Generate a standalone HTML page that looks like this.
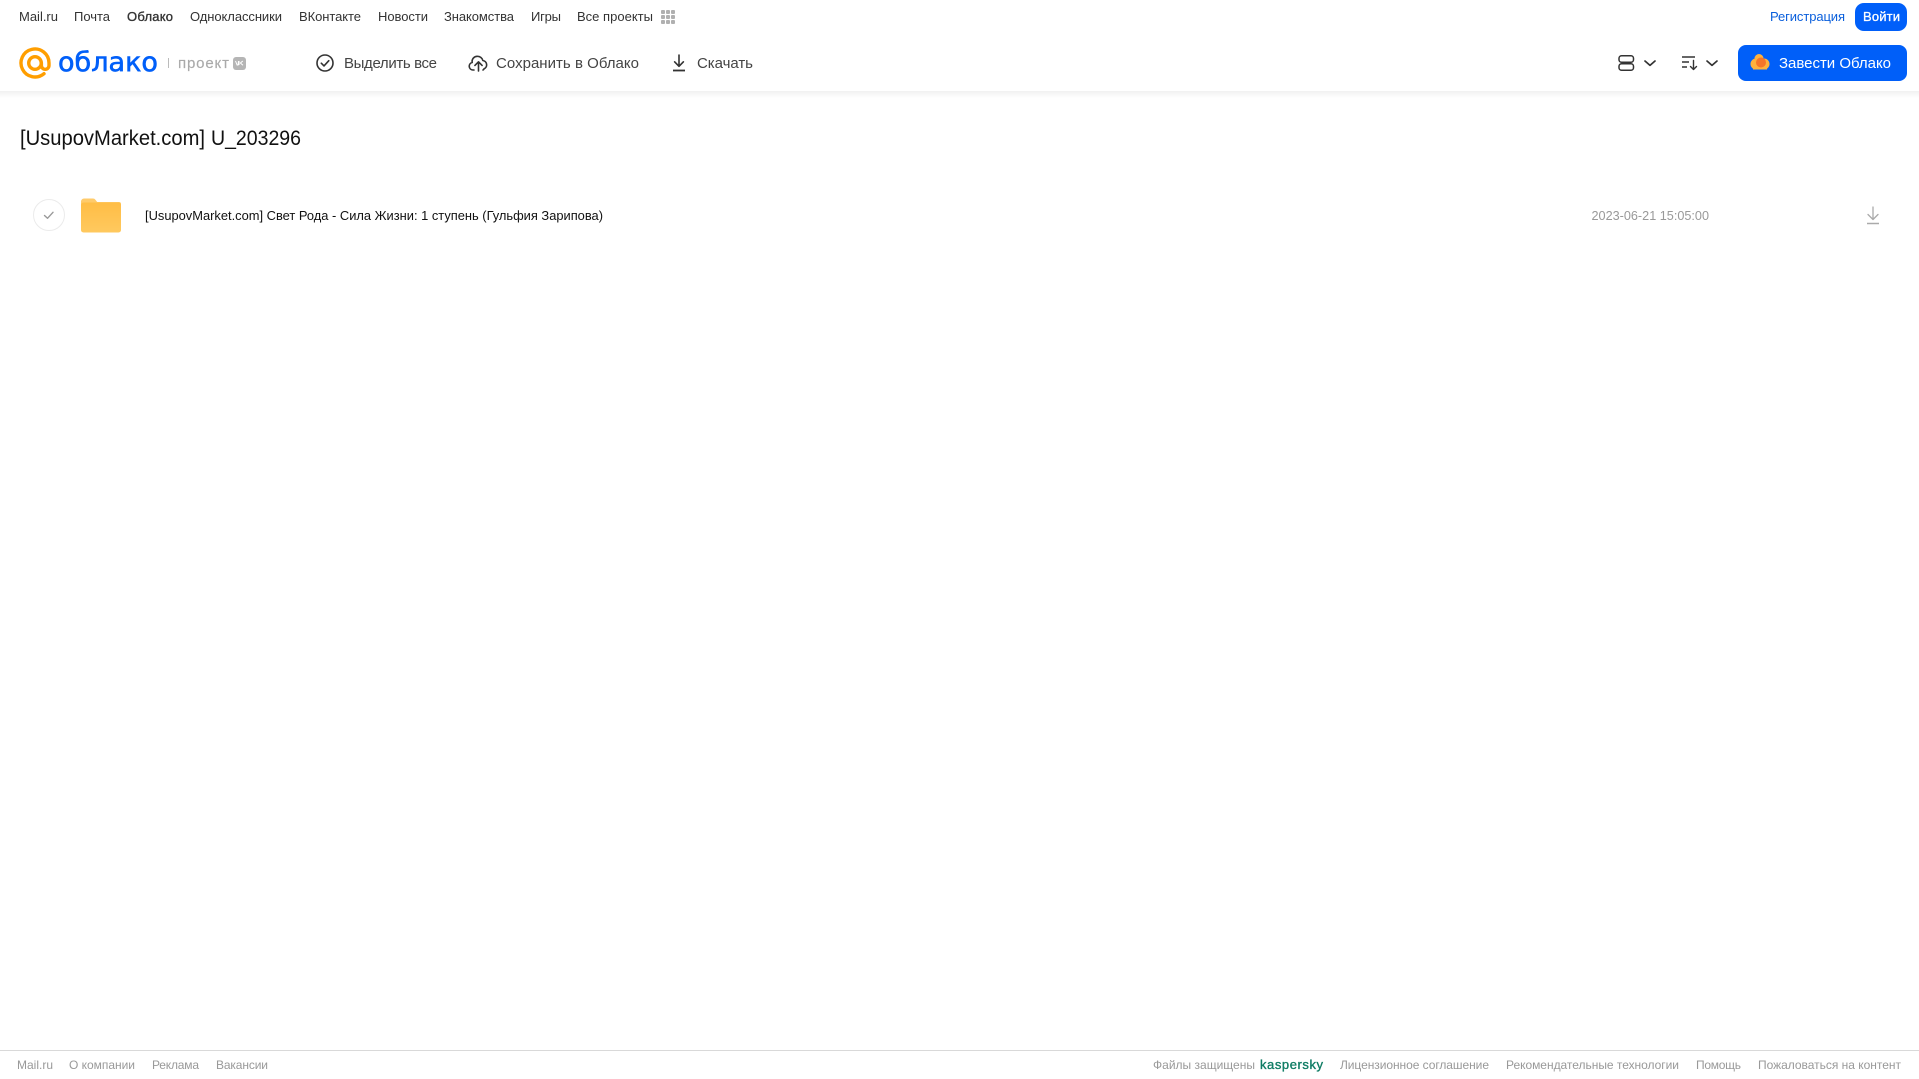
<!DOCTYPE html>
<html lang="ru">
<head>
<meta charset="utf-8">
<title>[UsupovMarket.com] U_203296</title>
<style>
html,body{margin:0;padding:0;background:#fff;width:1919px;height:1079px;overflow:hidden}
svg{display:block;position:absolute;left:0;top:0}
text{font-family:"Liberation Sans",Arial,sans-serif}
.n{font-size:13px;fill:#333}
.t{font-size:15px;fill:#444}
.f{font-size:12px;fill:#999}
</style>
</head>
<body>
<svg width="1919" height="1079" viewBox="0 0 1919 1079" xmlns="http://www.w3.org/2000/svg">
<defs>
<linearGradient id="sh" x1="0" y1="0" x2="0" y2="1"><stop offset="0" stop-color="#f1f1f1"/><stop offset="1" stop-color="#fff"/></linearGradient>
<linearGradient id="fo" x1="0" y1="0" x2="0" y2="1"><stop offset="0" stop-color="#ffbd45"/><stop offset="1" stop-color="#ffc95f"/></linearGradient>
</defs>
<rect x="0" y="91" width="1919" height="7" fill="url(#sh)"/>

<!-- top nav -->
<text class="n" x="19" y="21" textLength="39">Mail.ru</text>
<text class="n" x="74" y="21" textLength="36">Почта</text>
<text class="n" x="127" y="21" textLength="46" stroke="#333" stroke-width=".35">Облако</text>
<text class="n" x="190" y="21" textLength="92">Одноклассники</text>
<text class="n" x="299" y="21" textLength="62">ВКонтакте</text>
<text class="n" x="378" y="21" textLength="50">Новости</text>
<text class="n" x="444" y="21" textLength="70">Знакомства</text>
<text class="n" x="531" y="21" textLength="30">Игры</text>
<text class="n" x="577" y="21" textLength="76">Все проекты</text>
<g fill="#b0b0b0">
<rect x="661" y="10" width="4" height="4" rx="1"/><rect x="666" y="10" width="4" height="4" rx="1"/><rect x="671" y="10" width="4" height="4" rx="1"/>
<rect x="661" y="15" width="4" height="4" rx="1"/><rect x="666" y="15" width="4" height="4" rx="1"/><rect x="671" y="15" width="4" height="4" rx="1"/>
<rect x="661" y="20" width="4" height="4" rx="1"/><rect x="666" y="20" width="4" height="4" rx="1"/><rect x="671" y="20" width="4" height="4" rx="1"/>
</g>
<text class="n" x="1770" y="21" textLength="75" style="fill:#0a5fdc">Регистрация</text>
<rect x="1855" y="3" width="52" height="28" rx="9" fill="#005ff9"/>
<text class="n" x="1863" y="21" textLength="37" style="fill:#fff" stroke="#fff" stroke-width=".3">Войти</text>

<!-- logo -->
<path d="M44 73.700A14 14 0 1 1 49 63v2.500a3.800 3.800 0 0 1-7.600 0V63" fill="none" stroke="#ff9e00" stroke-width="3.400" stroke-linecap="round"/>
<circle cx="35" cy="63" r="6.300" fill="none" stroke="#ff9e00" stroke-width="3.400"/>
<text x="58" y="71" font-size="27" textLength="100" lengthAdjust="spacingAndGlyphs" fill="#005ff9" stroke="#005ff9" stroke-width=".6" style="font-family:'DejaVu Sans',sans-serif">облако</text>
<rect x="168" y="58" width="1" height="10" fill="#bbb"/>
<text x="178" y="68" font-size="15" textLength="51" fill="#aaa" stroke="#aaa" stroke-width=".15">проект</text>
<rect x="233" y="57" width="13" height="13" rx="3" fill="#b5b5b5"/>
<path d="M235.500 61l1.600 4h1l.4-4M239 61v4M242.800 61l-2.400 2 2.600 2.200" fill="none" stroke="#fff" stroke-width="1"/>

<!-- toolbar -->
<circle cx="325" cy="63" r="8" fill="none" stroke="#333" stroke-width="1.600"/>
<path d="M321.300 63.200l2.700 2.700 4.800-5.200" fill="none" stroke="#333" stroke-width="1.600" stroke-linecap="round" stroke-linejoin="round"/>
<text class="t" x="344" y="68" textLength="93">Выделить все</text>

<path d="M474 70h-1.200a3.800 3.800 0 0 1-.6-7.500 5.200 5.200 0 0 1 5.400-6.200 5.400 5.400 0 0 1 5.200 4.200 4.400 4.400 0 0 1 1.200 8.400 4 4 0 0 1-1 1.100" fill="none" stroke="#333" stroke-width="1.600" stroke-linecap="round" stroke-linejoin="round"/>
<path d="M478.500 71v-9M474.900 65.400l3.600-3.600 3.600 3.600" fill="none" stroke="#333" stroke-width="1.600" stroke-linecap="round" stroke-linejoin="round"/>
<text class="t" x="496" y="68" textLength="143">Сохранить в Облако</text>

<path d="M679 55v11M674.600 61.800l4.400 4.500 4.400-4.500" fill="none" stroke="#333" stroke-width="1.600" stroke-linecap="round" stroke-linejoin="round"/>
<path d="M673 70.500h12" fill="none" stroke="#333" stroke-width="1.800"/>
<text class="t" x="697" y="68" textLength="56">Скачать</text>

<rect x="1619" y="55.800" width="14.500" height="6.400" rx="2.500" fill="none" stroke="#333" stroke-width="1.500"/>
<rect x="1619" y="63.800" width="14.500" height="6.400" rx="2.500" fill="none" stroke="#333" stroke-width="1.500"/>
<path d="M1645 61l5 4.400 5-4.400" fill="none" stroke="#333" stroke-width="1.700" stroke-linecap="round" stroke-linejoin="round"/>

<path d="M1682 57h13M1682 62h7M1682 67h5" fill="none" stroke="#333" stroke-width="1.400"/>
<path d="M1693.500 60.500v9M1690.500 66.500l3 3 3-3" fill="none" stroke="#333" stroke-width="1.400" stroke-linecap="round" stroke-linejoin="round"/>
<path d="M1707 61l5 4.400 5-4.400" fill="none" stroke="#333" stroke-width="1.700" stroke-linecap="round" stroke-linejoin="round"/>

<rect x="1738" y="45" width="169" height="36" rx="8" fill="#005ff9"/>
<circle cx="1756" cy="64" r="5.500" fill="#ffb13d"/>
<circle cx="1759" cy="58.500" r="4.500" fill="#ffb13d"/>
<circle cx="1764" cy="64" r="5.500" fill="#ffb13d"/>
<rect x="1753" y="62" width="14" height="7.500" fill="#ffb13d"/>
<circle cx="1761" cy="62.500" r="5" fill="#f5752a"/>
<text class="t" x="1779" y="68" textLength="112" style="fill:#fff">Завести Облако</text>

<!-- title -->
<text x="20" y="145" font-size="21" textLength="185" lengthAdjust="spacingAndGlyphs" fill="#111">[UsupovMarket.com]</text>
<text x="211" y="145" font-size="21" textLength="90" lengthAdjust="spacingAndGlyphs" fill="#111">U_203296</text>

<!-- row -->
<circle cx="49" cy="215" r="15.500" fill="#fff" stroke="#ebebeb" stroke-width="1"/>
<path d="M44.500 215.500l3 2.800 5.500-6" fill="none" stroke="#999" stroke-width="1.400" stroke-linecap="round" stroke-linejoin="round"/>
<path d="M81 201.500a3 3 0 0 1 3-3h9a3 3 0 0 1 2.400 1.200l1.800 2.300H119a2 2 0 0 1 2 2v4H81z" fill="#ffcb6b"/>
<rect x="81" y="202.500" width="40" height="30" rx="2.500" fill="url(#fo)"/>
<text x="145" y="220" font-size="13" textLength="458" lengthAdjust="spacingAndGlyphs" fill="#111">[UsupovMarket.com] Свет Рода - Сила Жизни: 1 ступень (Гульфия Зарипова)</text>
<text x="1591.500" y="220" font-size="13" textLength="117.500" lengthAdjust="spacingAndGlyphs" fill="#999">2023-06-21 15:05:00</text>
<path d="M1873 207v12M1868 214.500l5 5 5-5" fill="none" stroke="#aaa" stroke-width="1.300" stroke-linecap="round" stroke-linejoin="round"/>
<path d="M1867 223.500h12" fill="none" stroke="#aaa" stroke-width="1.500"/>

<!-- footer -->
<rect x="0" y="1050" width="1919" height="1" fill="#d9d9d9"/>
<text class="f" x="17" y="1069" textLength="36">Mail.ru</text>
<text class="f" x="69" y="1069" textLength="66">О компании</text>
<text class="f" x="152" y="1069" textLength="47">Реклама</text>
<text class="f" x="216" y="1069" textLength="52">Вакансии</text>
<text class="f" x="1153" y="1069" textLength="102">Файлы защищены</text>
<text x="1260" y="1069" font-size="13" textLength="63" fill="#0f7c64" stroke="#0f7c64" stroke-width=".35">kaspersky</text>
<text class="f" x="1340" y="1069" textLength="149">Лицензионное соглашение</text>
<text class="f" x="1506" y="1069" textLength="173">Рекомендательные технологии</text>
<text class="f" x="1696" y="1069" textLength="45">Помощь</text>
<text class="f" x="1758" y="1069" textLength="143">Пожаловаться на контент</text>
</svg>
</body>
</html>
